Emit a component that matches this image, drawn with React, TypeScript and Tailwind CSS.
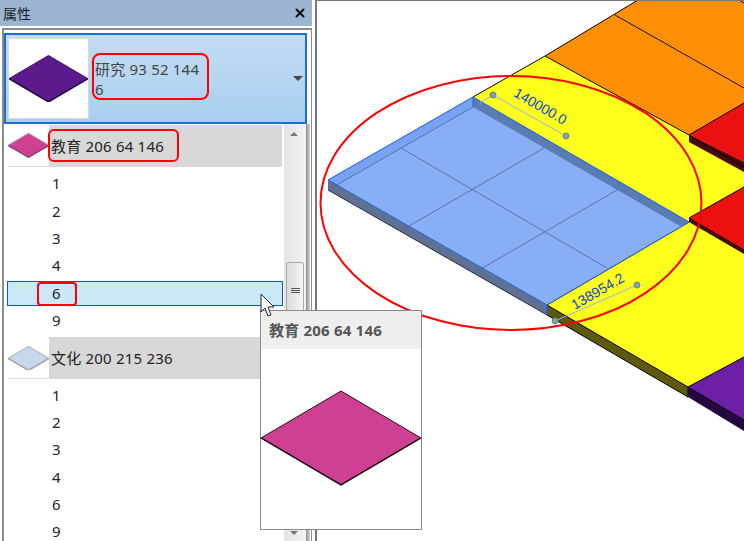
import type { ReactNode } from 'react'
import { X } from 'lucide-react'

const uiFont = { fontFamily: '"Noto Sans", "Noto Sans CJK SC", sans-serif' }
const canvasFont = { fontFamily: '"Liberation Sans", sans-serif' }

function Diamond({ fill, edge, side, sideWidth = 1.5 }: { fill: string; edge: string; side: string; sideWidth?: number }) {
    return (
        <svg viewBox="0 -1 160 96" className="block w-full">
            <polygon points="0,47 80,0 160,47 80,94" fill={fill} />
            <polyline points="0,47 80,94 160,47" fill="none" stroke={side} strokeWidth={sideWidth} vectorEffect="non-scaling-stroke" />
            <polyline points="0,47 80,0 160,47" fill="none" stroke={edge} strokeWidth="1" vectorEffect="non-scaling-stroke" />
        </svg>
    )
}

function TypeRow({ thumb, label, marked }: { thumb: ReactNode; label: string; marked?: boolean }) {
    return (
        <div className="relative ml-[4px] flex h-[42px] w-[274px] items-center bg-[#d8d8d8]">
            <div className="flex h-[41px] w-[41px] shrink-0 items-center self-start bg-white">{thumb}</div>
            <span className="ml-[2px] text-[15px] tracking-[0.2px] text-[#222]">{label}</span>
            {marked && <div className="absolute top-[4px] left-[40px] h-[33px] w-[131px] rounded-[6px] border-2 border-[#f00]" />}
        </div>
    )
}

function NumberRow({ n }: { n: string }) {
    return <div className="flex h-[27.3px] items-center pl-[48px] text-[15px] text-[#222]">{n}</div>
}

function Canvas() {
    return (
        <svg viewBox="317 1 427 540" className="block h-full w-full" style={canvasFont}>
            {/* orange block */}
            <polygon points="545,56 638,0 744,0 744,168 689,135" fill="#ff8f06" />
            <polyline points="545,56 638,0" fill="none" stroke="#000" strokeWidth="1" />
            <line x1="615" y1="15" x2="744" y2="88" stroke="#111" strokeWidth="1" />
            <line x1="739" y1="0" x2="744" y2="3" stroke="#111" strokeWidth="1" />

            {/* yellow strip */}
            <polygon points="473,97 545,56 689,135 744,167 744,187 689,218 689,222 473,97" fill="#ffff1e" />
            <polyline points="473,97 545,56 689,135" fill="none" stroke="#000" strokeWidth="1" />

            {/* red blocks */}
            <polygon points="689,135 744,103 744,162" fill="#ec1010" />
            <polygon points="689,135 744,162 744,172 689,142" fill="#4a0808" />
            <polygon points="689,218 744,187 744,250" fill="#ec1010" />
            <polygon points="689,218 744,250 744,259 689,226" fill="#4a0808" />
            <polyline points="744,103 689,135 744,167" fill="none" stroke="#000" strokeWidth="1" />
            <polyline points="744,187 689,218 744,250" fill="none" stroke="#000" strokeWidth="1" />

            {/* lower yellow block */}
            <polygon points="689,222 744,254 744,357 688,387 547,305" fill="#ffff1e" />
            <polygon points="547,305 688,387 688,397 547,315" fill="#5d5a10" />
            <polyline points="547,305 689,222" fill="none" stroke="#000" strokeWidth="1" />
            <polyline points="547,305 688,387 688,397 547,315" fill="none" stroke="#000" strokeWidth="1" />

            {/* purple block */}
            <polygon points="688,387 744,357 744,420" fill="#6d1fa8" />
            <polygon points="688,387 744,420 744,431 688,397" fill="#22083f" />
            <polyline points="744,357 688,387 744,420" fill="none" stroke="#000" strokeWidth="1" />

            {/* selected plate */}
            <polygon points="328,180 473,97 689,222 547,305" fill="#88aef5" />
            <polygon points="328,180 473,97 473,107 328,190" fill="#77a3f2" />
            <polygon points="473,97 689,222 680,226 473,107" fill="#5b7cb2" />
            <polygon points="328,180 547,305 547,315 328,190" fill="#5f7192" />
            <polygon points="328,180 547,305 689,222 473,97" fill="none" stroke="#1a5fe0" strokeWidth="1" />
            <line x1="328" y1="190" x2="547" y2="315" stroke="#27304d" strokeWidth="1" />
            <line x1="473" y1="97" x2="473" y2="107" stroke="#1a5fe0" strokeWidth="1" />
            <line x1="547" y1="305" x2="547" y2="315" stroke="#1a5fe0" strokeWidth="1.5" />
            <g stroke="#4a64a0" strokeWidth="0.8" fill="none">
                <line x1="328" y1="190" x2="473" y2="107" />
                <line x1="401" y1="148" x2="607" y2="268" />
                <line x1="544" y1="148" x2="402" y2="230" />
                <line x1="617" y1="190" x2="479" y2="270" />
            </g>

            {/* dimensions */}
            <line x1="493" y1="95" x2="566" y2="136" stroke="#8fb0ee" strokeWidth="1" />
            <line x1="555" y1="321" x2="637" y2="285" stroke="#8fb0ee" strokeWidth="1" />
            <line x1="480" y1="103" x2="493" y2="95" stroke="#8fb0ee" strokeWidth="1" />
            <g fill="#7f9fc0" stroke="#6b8a70" strokeWidth="1">
                <circle cx="493" cy="95" r="3" />
                <circle cx="566" cy="136" r="3" />
                <circle cx="555" cy="321" r="3" />
                <circle cx="637" cy="285" r="3" />
            </g>
            <text x="540" y="111" textAnchor="middle" fontSize="14" fill="#0f46c8" transform="rotate(30 540 107)">140000.0</text>
            <text x="598" y="296" textAnchor="middle" fontSize="14" fill="#0f46c8" transform="rotate(-30 598 292)">138954.2</text>

            <ellipse cx="511" cy="203" rx="190.5" ry="127" fill="none" stroke="#f00" strokeWidth="2" />
        </svg>
    )
}

export default function App() {
    return (
        <div className="relative flex h-[541px] w-[744px] overflow-hidden bg-white" style={uiFont}>
            {/* Properties panel */}
            <div className="flex h-full w-[312px] shrink-0 flex-col">
                <div className="flex h-[26px] shrink-0 items-center justify-between bg-[#9ab4d2] pr-[5px] pl-[3px]">
                    <span className="text-[14px] text-[#1c1c1c]">属性</span>
                    <X className="h-[14px] w-[14px] text-[#111]" strokeWidth={3.5} />
                </div>
                <div className="mt-[2px] ml-[2px] flex min-h-0 flex-1 flex-col border-t-2 border-r border-l-2 border-[#8c8c8c] pt-[3px]">
                    {/* Type selector */}
                    <div className="relative flex h-[91px] w-[303px] shrink-0 items-center border-2 border-[#1a6fd0] bg-gradient-to-b from-[#c4dcf3] to-[#a8cff0] pl-[2px]">
                        <div className="flex h-[81px] w-[81px] shrink-0 items-center border border-[#d8d8d8] bg-white">
                            <Diamond fill="#5d1a8c" edge="#3a1060" side="#1f0840" />
                        </div>
                        <div className="ml-[6px] w-[112px] text-[15px] leading-[20px] tracking-[0.2px] text-[#444]">研究 93 52 144 6</div>
                        <div className="absolute top-[18px] left-[86px] h-[47px] w-[117px] rounded-[8px] border-2 border-[#f00]" />
                        <div className="absolute top-[41px] right-[2px] h-0 w-0 border-x-[5px] border-t-[5px] border-x-transparent border-t-[#444]" />
                    </div>

                    {/* Type list */}
                    <div className="flex min-h-0 flex-1 overflow-hidden">
                        <div className="w-[280px] shrink-0 pt-[1px]">
                            <TypeRow thumb={<Diamond fill="#ce4092" edge="#a8a0a8" side="#7a5070" />} label="教育 206 64 146" marked />
                            <div className="pt-[3px]">
                                <NumberRow n="1" />
                                <NumberRow n="2" />
                                <NumberRow n="3" />
                                <NumberRow n="4" />
                                <div className="relative mt-[2px] ml-[3px] flex h-[25px] w-[276px] items-center border border-[#0a5cb0] bg-[#cbe8f8] pl-[44px] text-[15px] text-[#222]">
                                    6
                                    <div className="absolute top-0 left-[29px] h-[24px] w-[40px] rounded-[4px] border-2 border-[#f00]" />
                                </div>
                                <div className="mb-[4px]">
                                    <NumberRow n="9" />
                                </div>
                            </div>
                            <TypeRow thumb={<Diamond fill="#c8d7ec" edge="#b0b0b8" side="#a0a0a8" />} label="文化 200 215 236" />
                            <div className="pt-[2px]">
                                <NumberRow n="1" />
                                <NumberRow n="2" />
                                <NumberRow n="3" />
                                <NumberRow n="4" />
                                <NumberRow n="6" />
                                <NumberRow n="9" />
                            </div>
                        </div>

                        {/* Scrollbar */}
                        <div className="relative h-full w-[22px] shrink-0 bg-gradient-to-r from-[#e4e4e4] to-[#f2f2f2]">
                            <div className="absolute top-[8px] left-[6px] h-0 w-0 border-x-[4px] border-b-[4px] border-x-transparent border-b-[#777]" />
                            <div className="absolute top-[138px] left-[2px] flex h-[56px] w-[18px] items-center justify-center rounded-[2px] border border-[#aaa] bg-gradient-to-r from-[#dcdcdc] to-[#f4f4f4]">
                                <div className="flex flex-col gap-[1px]">
                                    <div className="h-[1px] w-[9px] bg-[#555]" />
                                    <div className="h-[1px] w-[9px] bg-[#555]" />
                                    <div className="h-[1px] w-[9px] bg-[#555]" />
                                </div>
                            </div>
                            <div className="absolute bottom-[6px] left-[6px] h-0 w-0 border-x-[4px] border-t-[4px] border-x-transparent border-t-[#777]" />
                        </div>
                        <div className="h-full w-[4px] shrink-0 bg-gradient-to-r from-[#8f8f8f] to-[#d4d4d4]" />
                    </div>
                </div>
            </div>

            {/* 3D view */}
            <div className="ml-[3px] h-full min-w-0 flex-1 border-t border-l-2 border-[#777]">
                <Canvas />
            </div>

            {/* Tooltip */}
            <div className="absolute top-[310px] left-[260px] h-[220px] w-[162px] border border-[#8a8a8a] bg-white">
                <div className="flex h-[38px] items-center bg-[#eeeeee] pl-[8px] text-[15px] font-bold tracking-[0.2px] text-[#555]">教育 206 64 146</div>
                <div className="mt-[41px]">
                    <Diamond fill="#ce4092" edge="#2a1020" side="#1a0810" />
                </div>
            </div>

            {/* Mouse cursor */}
            <svg className="absolute top-[293px] left-[260px]" width="16" height="26" viewBox="0 0 16 26">
                <path d="M1 1 L1 19 L5 15 L8 23 L11 22 L8 14 L14 14 Z" fill="#fff" stroke="#223" strokeWidth="1" />
            </svg>
        </div>
    )
}
